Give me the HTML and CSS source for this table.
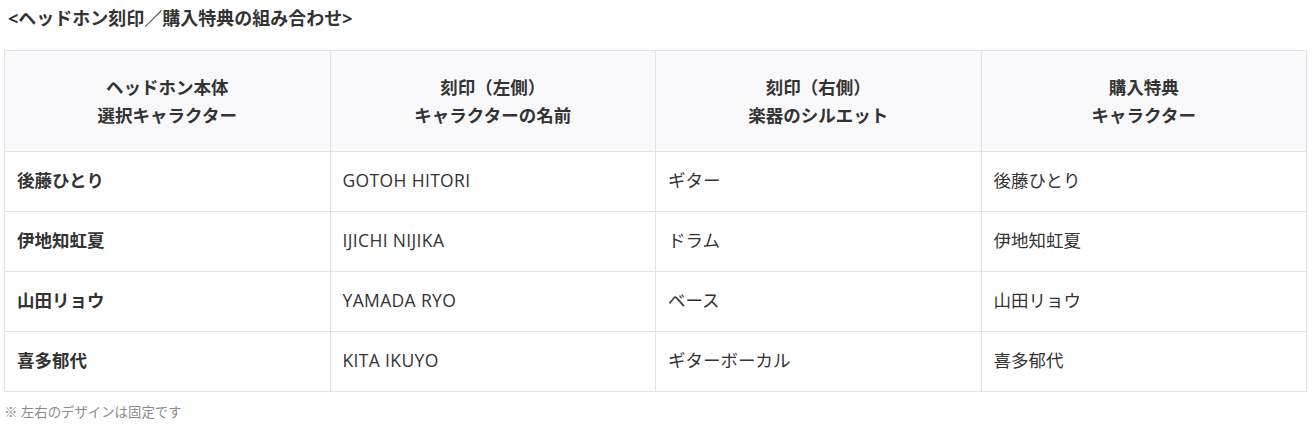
FILE: index.html
```html
<!DOCTYPE html>
<html lang="ja">
<head>
<meta charset="utf-8">
<link rel="stylesheet" href="styles.css">
</head>
<body>
<div class="page">
  <h2 class="title">&lt;ヘッドホン刻印／購入特典の組み合わせ&gt;</h2>
  <table class="combo">
    <thead>
      <tr>
        <th>ヘッドホン本体<br>選択キャラクター</th>
        <th>刻印（左側）<br>キャラクターの名前</th>
        <th>刻印（右側）<br>楽器のシルエット</th>
        <th>購入特典<br>キャラクター</th>
      </tr>
    </thead>
    <tbody>
      <tr><td class="name">後藤ひとり</td><td class="latin">GOTOH HITORI</td><td>ギター</td><td>後藤ひとり</td></tr>
      <tr><td class="name">伊地知虹夏</td><td class="latin">IJICHI NIJIKA</td><td>ドラム</td><td>伊地知虹夏</td></tr>
      <tr><td class="name">山田リョウ</td><td class="latin">YAMADA RYO</td><td>ベース</td><td>山田リョウ</td></tr>
      <tr><td class="name">喜多郁代</td><td class="latin">KITA IKUYO</td><td>ギターボーカル</td><td>喜多郁代</td></tr>
    </tbody>
  </table>
  <p class="note">※ 左右のデザインは固定です</p>
</div>
</body>
</html>
```

FILE: styles.css
```css
html, body {
  margin: 0;
  padding: 0;
  background: #fff;
}
body {
  font-family: "Open Sans", "Noto Sans CJK JP", sans-serif;
  color: #333;
}
.page {
  padding: 0 6px 0 4px;
}
.title {
  margin: 0;
  padding: 6px 0 0 4px;
  height: 50px;
  box-sizing: border-box;
  font-size: 18px;
  line-height: 24px;
  font-weight: 700;
  color: #333;
}
.combo {
  width: 1303px;
  border-collapse: collapse;
  table-layout: fixed;
  font-size: 17.5px;
}
.combo th, .combo td {
  border: 1px solid #e3e3e6;
}
.combo th {
  background: #f9f9fb;
  font-weight: 700;
  line-height: 28px;
  padding: 22px 12px;
  height: 101px;
  box-sizing: border-box;
  text-align: center;
}
.combo td {
  height: 60px;
  box-sizing: border-box;
  padding: 0 12px 3px 12px;
  line-height: 28px;
  font-weight: 400;
}
.combo td.name {
  font-weight: 700;
}
.combo td.latin {
  letter-spacing: 0.02em;
}
.note {
  margin: 10px 0 0 0;
  font-size: 13.4px;
  line-height: 20px;
  color: #8a8a8a;
}
```
